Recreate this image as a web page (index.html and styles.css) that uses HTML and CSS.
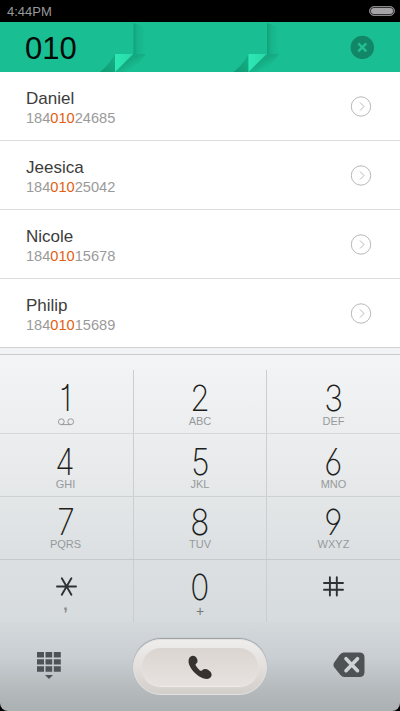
FILE: index.html
```html
<!DOCTYPE html>
<html lang="en">
<head>
<meta charset="utf-8">
<title>Dialer</title>
<link rel="stylesheet" href="styles.css">
</head>
<body>
<div class="phone">
  <div class="status"><span>4:44PM</span><i class="battery"></i></div>
  <header class="query">
    <svg class="folds" width="400" height="50" viewBox="0 0 400 50" aria-hidden="true">
      <defs>
        <linearGradient id="side"><stop offset="0" stop-color="#087654" stop-opacity=".42"/><stop offset=".3" stop-color="#087654" stop-opacity=".16"/><stop offset="1" stop-color="#087654" stop-opacity="0"/></linearGradient>
        <linearGradient id="corner" x1="0" y1="0" x2="1" y2="1"><stop offset=".4" stop-color="#087654" stop-opacity=".3"/><stop offset=".7" stop-color="#087654" stop-opacity="0"/></linearGradient>
        <linearGradient id="under" x1="1" y1="0" x2="0" y2="1"><stop offset="0" stop-color="#087654" stop-opacity=".2"/><stop offset="1" stop-color="#087654" stop-opacity=".5"/></linearGradient>
        <linearGradient id="flap"><stop offset="0" stop-color="#2de8b4"/><stop offset="1" stop-color="#28d9a7"/></linearGradient>
        <g id="fold">
          <path d="M33.500 1L46 5V32H33.500Z" fill="url(#side)"/>
          <path d="M33 32H46L32 50H15Z" fill="url(#corner)"/>
          <path d="M15 32V50H0Q9 43 15 32Z" fill="url(#under)"/>
          <path d="M15 32H33L15 50Z" fill="url(#flap)"/>
        </g>
      </defs>
      <use href="#fold" x="100"/>
      <use href="#fold" x="233.500"/>
    </svg>
    <span class="digits">010</span>
    <svg class="clear" width="24" height="24" viewBox="0 0 24 24"><circle cx="12.300" cy="12.400" r="11.700" fill="#128768"/><path d="M8.300 8.400l8 8M16.300 8.400l-8 8" stroke="#25bd93" stroke-width="2.500"/></svg>
  </header>
  <ul class="contacts">
    <li><div><div class="name">Daniel</div><div class="number">184<b>010</b>24685</div></div><svg class="go" width="22" height="22" viewBox="0 0 22 22"><circle cx="11" cy="11.500" r="9.700"/><path d="M10 7.500l4 4-4 4"/></svg></li>
    <li><div><div class="name">Jeesica</div><div class="number">184<b>010</b>25042</div></div><svg class="go" width="22" height="22" viewBox="0 0 22 22"><circle cx="11" cy="11.500" r="9.700"/><path d="M10 7.500l4 4-4 4"/></svg></li>
    <li><div><div class="name">Nicole</div><div class="number">184<b>010</b>15678</div></div><svg class="go" width="22" height="22" viewBox="0 0 22 22"><circle cx="11" cy="11.500" r="9.700"/><path d="M10 7.500l4 4-4 4"/></svg></li>
    <li><div><div class="name">Philip</div><div class="number">184<b>010</b>15689</div></div><svg class="go" width="22" height="22" viewBox="0 0 22 22"><circle cx="11" cy="11.500" r="9.700"/><path d="M10 7.500l4 4-4 4"/></svg></li>
  </ul>
  <div class="pad">
    <div class="row first">
      <div class="key"><span class="d">1</span><svg class="vm" width="18" height="8" viewBox="0 0 18 8"><circle cx="4.300" cy="3.700" r="2.900"/><circle cx="13.700" cy="3.700" r="2.900"/><path d="M4.300 6.600h9.400"/></svg></div>
      <div class="key"><span class="d">2</span><span class="l">ABC</span></div>
      <div class="key"><span class="d">3</span><span class="l">DEF</span></div>
    </div>
    <div class="row second">
      <div class="key"><span class="d">4</span><span class="l">GHI</span></div>
      <div class="key"><span class="d">5</span><span class="l">JKL</span></div>
      <div class="key"><span class="d">6</span><span class="l">MNO</span></div>
    </div>
    <div class="row third">
      <div class="key"><span class="d">7</span><span class="l">PQRS</span></div>
      <div class="key"><span class="d">8</span><span class="l">TUV</span></div>
      <div class="key"><span class="d">9</span><span class="l">WXYZ</span></div>
    </div>
    <div class="row fourth">
      <div class="key"><svg class="sym" width="22" height="26" viewBox="0 0 22 26"><path d="M2 12.500H21M6.800 4.200l9.600 16.600M16.400 4.200L6.800 20.800"/></svg><span class="l comma">,</span></div>
      <div class="key"><span class="d">0</span><span class="l plus">+</span></div>
      <div class="key"><svg class="sym" width="22" height="26" viewBox="0 0 22 26"><path d="M1 9H20M1 15.800H20M6.900 3.200V21.500M13.800 3.200V21.500"/></svg></div>
    </div>
  </div>
  <footer class="actions">
    <div class="slot"><svg class="grid" width="24" height="27" viewBox="0 0 24 27"><path d="M0 0h7v5.600H0zM8.500 0h6.700v5.600H8.500zM16.800 0h7v5.600h-7zM0 7.200h7v5.400H0zM8.500 7.200h6.700v5.400H8.500zM16.800 7.200h7v5.400h-7zM0 14.300h7v5.500H0zM8.500 14.300h6.700v5.500H8.500zM16.800 14.300h7v5.500h-7zM8 23h8l-4 4z"/></svg></div>
    <div class="call"><div class="face"><svg width="24" height="25" viewBox="0 0 24 25"><path d="M.8 4.200C1.600.9 5.400-.2 7.600 1.800 9.800 4 10.200 7 8.300 8.500c-1 .7-.9 1.500-.2 2.600 1 1.700 2.200 3.100 3.800 4.300 1 .7 1.600.5 2.300-.2 1.800-1.700 4.400-1.500 6.800.3 3.300 2.500 3.400 5.400.9 7.400-2.200 1.700-5.500 1.200-9-.6C7.500 19.600 3 14.300 1.100 9.500.4 7.500.4 5.800.8 4.200Z"/></svg></div></div>
    <div class="slot"><svg class="back" width="32" height="26" viewBox="0 0 32 26"><path d="M10.500.5H26.500Q31.500.5 31.500 5.500V20Q31.500 25 26.500 25H11.500Q9 25 7 22.500L1.200 15.200Q-.3 13 1.200 10.600L6.500 3Q8.500.5 10.500.5Z" fill="#4e5255"/><path d="M13 6.700l11.500 12M24.500 6.700L13 18.700" stroke="#cfd3d5" stroke-width="3.600" stroke-linecap="round"/></svg></div>
  </footer>
</div>
</body>
</html>
```
FILE: styles.css
```css
* { box-sizing: border-box; }
html { background: #000; }
body { margin: 0; background: #000; font-family: "Liberation Sans", Arial, sans-serif; }
.phone { width: 400px; height: 711px; display: flex; flex-direction: column; background: #000; overflow: hidden; }
.status { height: 22px; background: #000; color: #999; font-size: 13px; line-height: 23px; padding: 0 5px 0 7px; display: flex; justify-content: space-between; align-items: center; }
.battery { width: 26px; height: 10px; border-radius: 5px; background: #a5a3a5; border: 1px solid #888; box-shadow: inset 0 0 0 1px #333; }
.query { height: 50px; background: #19bf93; position: relative; display: flex; align-items: center; justify-content: space-between; padding: 0 26px 0 25px; }
.folds { position: absolute; left: 0; top: 0; }
.digits { position: relative; font-size: 31px; line-height: 50px; padding-top: 4px; color: #030b09; }
.clear { position: relative; }
.contacts { list-style: none; margin: 0; padding: 0; height: 275px; background: #fff; flex: none; }
.contacts li { height: 69px; border-bottom: 1px solid #dcdcdc; display: flex; justify-content: space-between; align-items: center; padding: 0 28px 0 26px; }
.contacts li:last-child { border-bottom: 0; height: 68px; }
.name { font-size: 17px; line-height: 20px; color: #3c3c3c; padding-top: 4px; }
.number { font-size: 14.600px; line-height: 18px; color: #9a9a9a; }
.number b { font-weight: 400; color: #e2600f; }
.go { fill: none; stroke: #b8b8b8; stroke-width: 1; }
.pad { height: 275px; flex: none; background: linear-gradient(#f4f5f7, #e8eaeb 45%, #dce0e2 75%, #d6dbde); }
.pad::before { content: ""; display: block; height: 6px; background: #f2f3f4; border-top: 1px solid #cfd2d4; border-bottom: 1px solid #c9cdd0; }
.row { display: grid; grid-template-columns: 134px 133px 133px; border-bottom: 1px solid #d6d9da; }
.first { height: 79px; padding-top: 15px; }
.second { height: 63px; border-color: #cfd2d4; }
.third { height: 63px; border-color: #c4c9cb; }
.fourth { height: 64px; border-color: #bbc0c3; }
.key { display: flex; flex-direction: column; align-items: center; border-right: 1px solid #cbcfd1; padding-top: 10px; }
.key:first-child { padding-right: 2px; }
.third .key { padding-top: 7px; }
.fourth .key { padding-top: 9px; }
.key:last-child { border-right: 0; }
.d { font-family: Inter, Roboto, sans-serif; font-weight: 200; font-feature-settings: "cv01", "cv03", "cv04"; font-size: 36px; line-height: 36px; height: 34px; color: #1c1e20; transform: scaleX(.88); }
.first .d { height: 35px; }
.l { font-size: 11px; line-height: 12px; color: #969a9c; }
.vm { fill: none; stroke: #969a9c; stroke-width: 1; margin-top: 3px; }
.sym { fill: none; stroke: #2e3032; stroke-width: 1.900; stroke-linecap: round; margin-top: 5px; }
.plus { font-size: 14px; color: #777; margin-top: 2px; }
.comma { font-size: 16px; font-weight: 700; color: #888; margin-top: -1px; }
.actions { flex: 1; background: linear-gradient(#d4d9dc, #c8ced1 40%, #b5bbbd 75%, #abb1b3); border-radius: 0 0 8px 8px; display: flex; justify-content: space-between; padding: 17px 0 0; }
.slot { width: 133px; display: flex; align-items: flex-start; padding-top: 12px; }
.slot:first-child { padding-left: 37px; }
.slot:last-child { padding-left: 66px; }
.grid { fill: #4e5357; margin-top: 1px; }
.back { margin-top: 1px; }
.call { width: 134px; height: 56px; border-radius: 28px; background: linear-gradient(#efeeed, #e2dfdc 50%, #d2ceca); border: 1px solid #e4e2e0; box-shadow: 0 -1px 1px #9b9d9e; padding: 8px; }
.face { height: 38px; border-radius: 19px; background: linear-gradient(#dad5d0, #e7e2df); box-shadow: 0 1px 1px #f1eeec; display: flex; align-items: center; justify-content: center; }
.face svg { fill: #35322f; }
```
